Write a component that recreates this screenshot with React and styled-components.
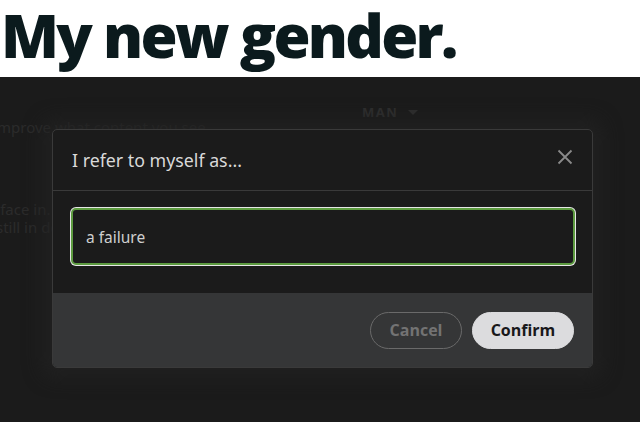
import styled, { createGlobalStyle } from 'styled-components';

const GlobalStyle = createGlobalStyle`
  * {
    margin: 0;
    padding: 0;
    box-sizing: border-box;
  }
  html, body, #root {
    width: 100%;
    height: 100%;
    background: #1b1b1b;
    overflow: hidden;
  }
`;

const Page = styled.div`
  display: flex;
  flex-direction: column;
  height: 422px;
`;

const Caption = styled.h1`
  height: 77px;
  background: #ffffff;
  color: #0b1a1d;
  font-family: "Open Sans", sans-serif;
  font-weight: 800;
  font-size: 60px;
  line-height: 70px;
  letter-spacing: -2.7px;
  padding-left: 1px;
`;

const Stage = styled.div`
  position: relative;
  flex: 1;
  background: #1b1b1b;
  font-family: "Noto Sans", sans-serif;
  color: #2b2b2b;
`;

const Behind = styled.div`
  display: flex;
  flex-direction: column;
  padding-top: 29px;
  font-size: 15px;
`;

const BehindRow = styled.div`
  display: flex;
  align-items: center;
  padding-left: 362px;
  gap: 10px;
  height: 12px;
  font-weight: 700;
  font-size: 13px;
  letter-spacing: 1.5px;
  color: #2f2f2f;
`;

const Caret = styled.span`
  width: 0;
  height: 0;
  border-left: 5px solid transparent;
  border-right: 5px solid transparent;
  border-top: 5px solid #2f2f2f;
`;

const BehindLine = styled.p`
  margin-left: ${p => p.$shift || 0}px;
  margin-top: ${p => p.$top || 0}px;
  line-height: 18px;
  white-space: nowrap;
`;

const Modal = styled.div`
  position: absolute;
  left: 52px;
  top: 52px;
  width: 541px;
  height: 239px;
  display: flex;
  flex-direction: column;
  background: #1b1b1b;
  border: 1px solid #3a3a3a;
  border-radius: 5px;
  overflow: hidden;
  box-shadow: 0 0 18px 10px rgba(34, 34, 34, 0.8);
`;

const ModalHead = styled.div`
  height: 61px;
  display: flex;
  align-items: center;
  justify-content: space-between;
  padding: 0 19px 0 19px;
  border-bottom: 1px solid #3a3a3a;
`;

const ModalTitle = styled.h2`
  font-family: "Noto Sans", sans-serif;
  font-weight: 400;
  font-size: 17.8px;
  color: #d9d9d9;
`;

const CloseButton = styled.button`
  display: flex;
  background: none;
  border: none;
  margin-top: -6px;
`;

const ModalBody = styled.div`
  height: 102px;
  padding: 17px 17px 0 18px;
`;

const Field = styled.div`
  height: 57px;
  display: flex;
  align-items: center;
  padding-left: 13px;
  border: 2px solid #5d9b40;
  border-radius: 5px;
  box-shadow: 0 0 0 1px #e6e6e6;
  background: #1b1b1b;
  font-family: "Noto Sans", sans-serif;
  font-size: 15.5px;
  color: #cfcfcf;
`;

const ModalFoot = styled.div`
  flex: 1;
  display: flex;
  align-items: center;
  justify-content: flex-end;
  gap: 10px;
  padding: 0 18px 0 0;
  background: #353637;
`;

const Pill = styled.button`
  height: 37px;
  width: ${p => p.$w}px;
  border-radius: 19px;
  font-family: "Open Sans", sans-serif;
  font-weight: 700;
  font-size: 16px;
  border: 1px solid ${p => (p.$primary ? '#dcdcde' : '#6a6a6a')};
  background: ${p => (p.$primary ? '#dcdcde' : 'transparent')};
  color: ${p => (p.$primary ? '#18181a' : '#737373')};
`;

export default function App() {
  return (
    <>
      <GlobalStyle />
      <Page>
        <Caption>My new gender.</Caption>
        <Stage>
          <Behind>
            <BehindRow>MAN<Caret /></BehindRow>
            <BehindLine $shift={-3}>mprove what content you see.</BehindLine>
            <BehindLine $shift={-6} $top={64}>rface in.</BehindLine>
            <BehindLine $shift={-4}>still in dev</BehindLine>
          </Behind>
          <Modal>
            <ModalHead>
              <ModalTitle>I refer to myself as...</ModalTitle>
              <CloseButton aria-label="close">
                <svg width="16" height="16" viewBox="0 0 16 16">
                  <path d="M1.5 1.5 L14.5 14.5 M14.5 1.5 L1.5 14.5" stroke="#8a8a8a" strokeWidth="1.8" />
                </svg>
              </CloseButton>
            </ModalHead>
            <ModalBody>
              <Field>a failure</Field>
            </ModalBody>
            <ModalFoot>
              <Pill $w={92}>Cancel</Pill>
              <Pill $w={102} $primary>Confirm</Pill>
            </ModalFoot>
          </Modal>
        </Stage>
      </Page>
    </>
  );
}
